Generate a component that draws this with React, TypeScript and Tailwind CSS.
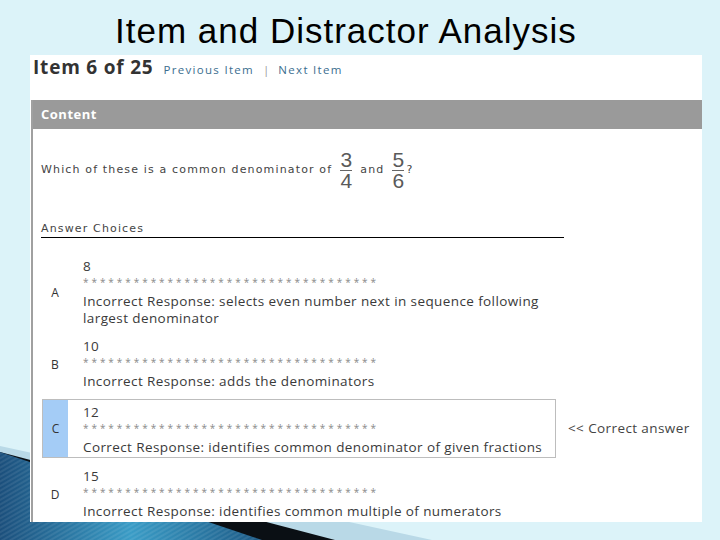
import React from 'react'

type Choice = {
  letter: string
  value: string
  lines: string[]
  correct?: boolean
}

const choices: Choice[] = [
  {
    letter: 'A',
    value: '8',
    lines: ['Incorrect Response: selects even number next in sequence following', 'largest denominator']
  },
  { letter: 'B', value: '10', lines: ['Incorrect Response: adds the denominators'] },
  {
    letter: 'C',
    value: '12',
    lines: ['Correct Response: identifies common denominator of given fractions'],
    correct: true
  },
  { letter: 'D', value: '15', lines: ['Incorrect Response: identifies common multiple of numerators'] }
]

const stars = '*'.repeat(35)

function Fraction({ top, bottom }: { top: string; bottom: string }) {
  return (
    <span className="inline-flex flex-col items-center mx-[8px] font-['Liberation_Sans',sans-serif] text-[21px] text-[#5a5a5a] tracking-normal">
      <span className="leading-[20px] h-[20px]">{top}</span>
      <span className="w-[12px] h-px bg-[#666]" />
      <span className="leading-[20px] h-[20px]">{bottom}</span>
    </span>
  )
}

function ChoiceBody({ c }: { c: Choice }) {
  return (
    <div className="pl-[15px] text-[#3a3a3a] font-['Open_Sans',sans-serif] text-[13.5px] tracking-[0.4px]">
      <div className="h-[15px] leading-[15px]">{c.value}</div>
      <div className="h-[17px] leading-[17px] text-[10px] tracking-[2.95px] text-[#8a8a8a]">{stars}</div>
      <div className="mt-[2px]">
        {c.lines.map((l) => (
          <div key={l} className="h-[17px] leading-[17px] whitespace-nowrap">
            {l}
          </div>
        ))}
      </div>
    </div>
  )
}

export default function App() {
  return (
    <div className="relative w-[720px] h-[540px] overflow-hidden bg-[#dcf3f9]">
      {/* slide theme decoration, bottom left */}
      <svg className="absolute left-0 top-0" width="720" height="540" viewBox="0 0 720 540">
        <defs>
          <linearGradient id="wedge" x1="0" y1="0" x2="1" y2="0">
            <stop offset="0" stopColor="#1b4f7c" />
            <stop offset="0.5" stopColor="#3a9cc6" />
            <stop offset="1" stopColor="#1d5a86" />
          </linearGradient>
          <pattern id="hatch" width="4" height="4" patternUnits="userSpaceOnUse" patternTransform="rotate(60)">
            <rect width="2" height="4" fill="#ffffff" opacity="0.08" />
          </pattern>
        </defs>
        <polygon points="0,446 432,540 0,540" fill="#b9d9e7" />
        <polygon points="0,452 335,540 0,540" fill="#0a0f14" />
        <polygon points="0,452 262,540 0,540" fill="url(#wedge)" />
        <polygon points="0,452 262,540 0,540" fill="url(#hatch)" />
      </svg>

      <div className="relative">
        <div className="h-[55px] pt-[11px] pl-[115px] font-['Liberation_Sans',Arial,sans-serif] text-[35px] leading-[40px] tracking-[1px] text-black">
          Item and Distractor Analysis
        </div>

        <div className="ml-[30px] w-[672px] h-[467px] bg-white overflow-hidden">
          <div className="h-[45px] pl-[3px] flex items-baseline leading-[24px] font-['Open_Sans',sans-serif]">
            <span className="font-bold text-[19px] tracking-[0.8px] text-[#333]">Item 6 of 25</span>
            <span className="ml-[10px] text-[11.5px] tracking-[1.3px] text-[#3b6e8f]">Previous Item</span>
            <span className="mx-[9px] text-[11.5px] text-[#999]">|</span>
            <span className="text-[11.5px] tracking-[1.3px] text-[#3b6e8f]">Next Item</span>
          </div>

          <div className="ml-[1px] h-[422px] border-l-2 border-[#a0a0a0]">
            <div className="h-[29px] bg-[#9a9a9a] flex items-center pl-[8px] font-['Open_Sans',sans-serif] font-bold text-[13px] tracking-[0.5px] text-white">
              Content
            </div>

            <div className="pl-[8px] pt-[21px] flex items-center font-['DejaVu_Sans',sans-serif] text-[11px] tracking-[1.15px] text-[#444]">
              <span>Which of these is a common denominator of</span>
              <Fraction top="3" bottom="4" />
              <span>and</span>
              <Fraction top="5" bottom="6" />
              <span className="-ml-[6px]">?</span>
            </div>

            <div className="ml-[8px] mt-[30px] w-[523px] border-b border-black pb-[1px] font-['DejaVu_Sans',sans-serif] text-[11px] leading-[15px] tracking-[1.15px] text-[#444]">
              Answer Choices
            </div>

            <div className="ml-[9px] mt-[21px] flex flex-col">
              {choices.map((c, i) => (
                <div
                  key={c.letter}
                  className={
                    i === 0 ? 'flex items-center' : i === 1 ? 'flex items-center mt-[12px]' : i === 2 ? 'flex items-center mt-[9px]' : 'flex items-center mt-[11px]'
                  }
                >
                  {c.correct ? (
                    <>
                      <div className="w-[514px] h-[59px] border border-[#bdbdbd] flex items-stretch">
                        <div className="w-[25px] bg-[#a4ccf6] flex items-center justify-center font-['Open_Sans',sans-serif] text-[12px] text-[#333]">
                          {c.letter}
                        </div>
                        <div className="pt-[5px]">
                          <ChoiceBody c={c} />
                        </div>
                      </div>
                      <div className="ml-[12px] font-['Open_Sans',sans-serif] text-[13.5px] tracking-[0.4px] text-[#444]">
                        &lt;&lt; Correct answer
                      </div>
                    </>
                  ) : (
                    <>
                      <div className="w-[26px] flex justify-center font-['Open_Sans',sans-serif] text-[12px] text-[#333]">
                        {c.letter}
                      </div>
                      <ChoiceBody c={c} />
                    </>
                  )}
                </div>
              ))}
            </div>
          </div>
        </div>
      </div>
    </div>
  )
}
